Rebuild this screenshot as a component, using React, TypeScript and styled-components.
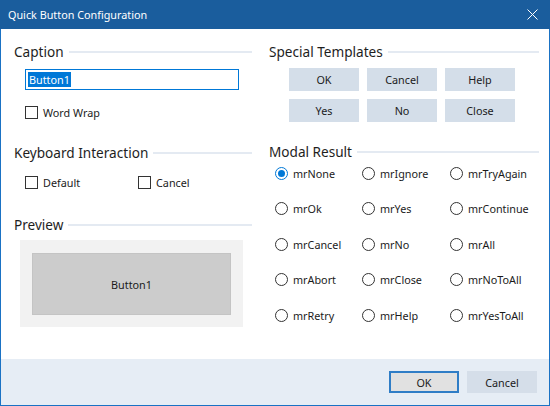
import styled, { createGlobalStyle } from 'styled-components'

const GlobalStyle = createGlobalStyle`
  html, body {
    margin: 0;
    padding: 0;
    background: #ffffff;
  }
  body {
    font-family: "Noto Sans", "Open Sans", "Liberation Sans", sans-serif;
    font-size: 10.8px;
    color: #1b1b1b;
  }
`

const Window = styled.div`
  width: 550px;
  height: 406px;
  box-sizing: border-box;
  border: 1px solid #1a72c4;
  border-top: none;
  display: flex;
  flex-direction: column;
  background: #ffffff;
`

const TitleBar = styled.div`
  height: 29px;
  margin: 0 -1px;
  background: #1a5d9d;
  color: #ffffff;
  display: flex;
  align-items: center;
  justify-content: space-between;
  padding: 0 9px 0 8px;
  font-size: 10.8px;
  flex-shrink: 0;
`

const CloseIcon = styled.svg`
  width: 11px;
  height: 11px;
  margin-right: 3px;
`

const Body = styled.div`
  flex: 1;
  display: grid;
  grid-template-columns: 238px 270px;
  column-gap: 17px;
  padding: 12px 10px 0 13px;
`

const Column = styled.div`
  display: flex;
  flex-direction: column;
`

const Heading = styled.div<{ $top?: number }>`
  display: flex;
  align-items: center;
  gap: 5px;
  height: 20px;
  font-size: 13.6px;
  color: #1e1e1e;
  margin-top: ${(p) => p.$top ?? 0}px;
  white-space: nowrap;

  &::after {
    content: '';
    flex: 1;
    height: 2px;
    background: #e4eaf2;
    margin-top: 1px;
  }
`

const TextInput = styled.div`
  margin: 8px 0 0 11px;
  width: 214px;
  height: 21px;
  box-sizing: border-box;
  border: 1px solid #0078d7;
  display: flex;
  align-items: center;
  padding-left: 2px;
`

const Selected = styled.span`
  background: #0078d7;
  color: #ffffff;
  line-height: 15px;
  padding: 0 1px;
`

const CheckRow = styled.div<{ $top: number }>`
  display: flex;
  margin: ${(p) => p.$top}px 0 0 11px;
`

const CheckItem = styled.label<{ $width?: number }>`
  display: flex;
  align-items: center;
  gap: 5px;
  height: 14px;
  width: ${(p) => (p.$width ? `${p.$width}px` : 'auto')};
`

const Box = styled.span`
  width: 13px;
  height: 13px;
  box-sizing: border-box;
  border: 1px solid #333333;
  background: #ffffff;
  flex-shrink: 0;
`

const PreviewFrame = styled.div`
  margin: 6px 0 0 6px;
  width: 223px;
  height: 87px;
  background: #f2f2f2;
  padding: 13px 12px 12px 12px;
  box-sizing: border-box;
`

const PreviewButton = styled.div`
  width: 100%;
  height: 100%;
  box-sizing: border-box;
  background: #cccccc;
  border: 1px solid #c4c4c4;
  display: flex;
  align-items: center;
  justify-content: center;
`

const TemplateGrid = styled.div`
  margin: 7px 0 0 20px;
  display: grid;
  grid-template-columns: repeat(3, 70px);
  grid-auto-rows: 23px;
  gap: 8px;
`

const FlatButton = styled.div`
  background: #d4dee9;
  display: flex;
  align-items: center;
  justify-content: center;
`

const RadioGrid = styled.div`
  margin: 5px 0 0 6px;
  display: grid;
  grid-template-columns: 87px 88px 88px;
  grid-auto-rows: 35.5px;
`

const RadioItem = styled.label`
  display: flex;
  align-items: center;
  gap: 5px;
  height: 14px;
`

const Circle = styled.span<{ $on?: boolean }>`
  width: 13px;
  height: 13px;
  box-sizing: border-box;
  border-radius: 50%;
  border: 1px solid ${(p) => (p.$on ? '#0078d7' : '#333333')};
  display: flex;
  align-items: center;
  justify-content: center;
  flex-shrink: 0;

  &::after {
    content: '';
    width: 7px;
    height: 7px;
    border-radius: 50%;
    background: ${(p) => (p.$on ? '#0078d7' : 'transparent')};
  }
`

const Footer = styled.div`
  height: 46px;
  flex-shrink: 0;
  background: #e6edf5;
  display: flex;
  justify-content: flex-end;
  align-items: flex-start;
  gap: 8px;
  padding: 12px 12px 0 0;
  box-sizing: border-box;
`

const DialogButton = styled.div<{ $default?: boolean }>`
  width: 70px;
  height: 22px;
  box-sizing: border-box;
  background: ${(p) => (p.$default ? '#e1e1e1' : '#d5dee9')};
  border: ${(p) => (p.$default ? '2px solid #2f7dc6' : 'none')};
  display: flex;
  align-items: center;
  justify-content: center;
`

const results = [
  'mrNone', 'mrIgnore', 'mrTryAgain',
  'mrOk', 'mrYes', 'mrContinue',
  'mrCancel', 'mrNo', 'mrAll',
  'mrAbort', 'mrClose', 'mrNoToAll',
  'mrRetry', 'mrHelp', 'mrYesToAll',
]

const templates = ['OK', 'Cancel', 'Help', 'Yes', 'No', 'Close']

export default function App() {
  return (
    <>
      <GlobalStyle />
      <Window>
        <TitleBar>
          <span>Quick Button Configuration</span>
          <CloseIcon viewBox="0 0 11 11">
            <path d="M0.5 0.5 L10.5 10.5 M10.5 0.5 L0.5 10.5" stroke="#ffffff" strokeWidth="1" />
          </CloseIcon>
        </TitleBar>
        <Body>
          <Column>
            <Heading>Caption</Heading>
            <TextInput>
              <Selected>Button1</Selected>
            </TextInput>
            <CheckRow $top={15}>
              <CheckItem>
                <Box />
                Word Wrap
              </CheckItem>
            </CheckRow>
            <Heading $top={23}>Keyboard Interaction</Heading>
            <CheckRow $top={13}>
              <CheckItem $width={113}>
                <Box />
                Default
              </CheckItem>
              <CheckItem>
                <Box />
                Cancel
              </CheckItem>
            </CheckRow>
            <Heading $top={25}>Preview</Heading>
            <PreviewFrame>
              <PreviewButton>Button1</PreviewButton>
            </PreviewFrame>
          </Column>
          <Column>
            <Heading>Special Templates</Heading>
            <TemplateGrid>
              {templates.map((t) => (
                <FlatButton key={t}>{t}</FlatButton>
              ))}
            </TemplateGrid>
            <Heading $top={19}>Modal Result</Heading>
            <RadioGrid>
              {results.map((r, i) => (
                <RadioItem key={r}>
                  <Circle $on={i === 0} />
                  {r}
                </RadioItem>
              ))}
            </RadioGrid>
          </Column>
        </Body>
        <Footer>
          <DialogButton $default>OK</DialogButton>
          <DialogButton>Cancel</DialogButton>
        </Footer>
      </Window>
    </>
  )
}
